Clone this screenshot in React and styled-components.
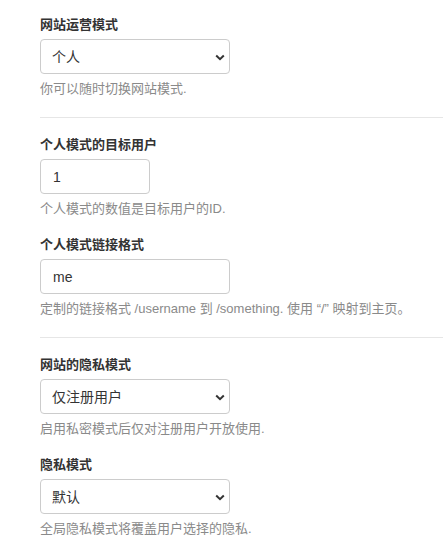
import React from 'react';
import styled, { createGlobalStyle } from 'styled-components';

const GlobalStyle = createGlobalStyle`
  body {
    margin: 0;
    background: #fff;
    font-family: "Liberation Sans", "Noto Sans CJK SC", sans-serif;
    color: #333;
  }
`;

const Page = styled.div`
  padding: 15px 0 0 40px;
`;

const Group = styled.div`
  margin-bottom: 16px;
`;

const Label = styled.label`
  display: block;
  font-size: 13px;
  font-weight: bold;
  line-height: 20px;
  color: #333;
  margin-bottom: 4px;
`;

const Field = styled.input`
  display: block;
  box-sizing: border-box;
  width: ${(p) => p.$width || 190}px;
  height: 35px;
  padding: 0 12px;
  border: 1px solid #ccc;
  border-radius: 4px;
  font-family: inherit;
  font-size: 14px;
  color: #333;
  background: #fff;
  outline: none;
`;

const SelectWrap = styled.div`
  position: relative;
  width: 190px;
`;

const Select = styled.select`
  display: block;
  box-sizing: border-box;
  width: 100%;
  height: 35px;
  padding: 0 30px 0 11px;
  border: 1px solid #ccc;
  border-radius: 4px;
  font-family: inherit;
  font-size: 14px;
  color: #333;
  background: #fff;
  appearance: none;
  -webkit-appearance: none;
  outline: none;
`;

const Chevron = styled.svg`
  position: absolute;
  right: 5px;
  top: 15px;
  pointer-events: none;
`;

const Help = styled.p`
  margin: 5px 0 0;
  font-size: 13px;
  line-height: 20px;
  color: #8a8a8a;
`;

const Divider = styled.hr`
  border: 0;
  border-top: 1px solid #e6e6e6;
  margin: 18px 0 17px;
`;

const Arrow = () => (
  <Chevron width="10" height="7" viewBox="0 0 10 7">
    <path d="M1.2 1.5 L5 5.2 L8.8 1.5" fill="none" stroke="#333" strokeWidth="2" />
  </Chevron>
);

const Dropdown = ({ value, options }) => (
  <SelectWrap>
    <Select defaultValue={value}>
      {options.map((o) => (
        <option key={o}>{o}</option>
      ))}
    </Select>
    <Arrow />
  </SelectWrap>
);

const App = () => {
  return (
    <Page>
      <GlobalStyle />
      <Group>
        <Label>网站运营模式</Label>
        <Dropdown value="个人" options={['个人', '社区']} />
        <Help>你可以随时切换网站模式.</Help>
      </Group>
      <Divider />
      <Group>
        <Label>个人模式的目标用户</Label>
        <Field $width={110} defaultValue="1" />
        <Help>个人模式的数值是目标用户的ID.</Help>
      </Group>
      <Group>
        <Label>个人模式链接格式</Label>
        <Field defaultValue="me" />
        <Help>定制的链接格式 /username 到 /something. 使用 “/” 映射到主页。</Help>
      </Group>
      <Divider />
      <Group>
        <Label>网站的隐私模式</Label>
        <Dropdown value="仅注册用户" options={['所有人', '仅注册用户']} />
        <Help>启用私密模式后仅对注册用户开放使用.</Help>
      </Group>
      <Group>
        <Label>隐私模式</Label>
        <Dropdown value="默认" options={['默认', '公开', '私密']} />
        <Help>全局隐私模式将覆盖用户选择的隐私.</Help>
      </Group>
    </Page>
  );
};

export default App;
